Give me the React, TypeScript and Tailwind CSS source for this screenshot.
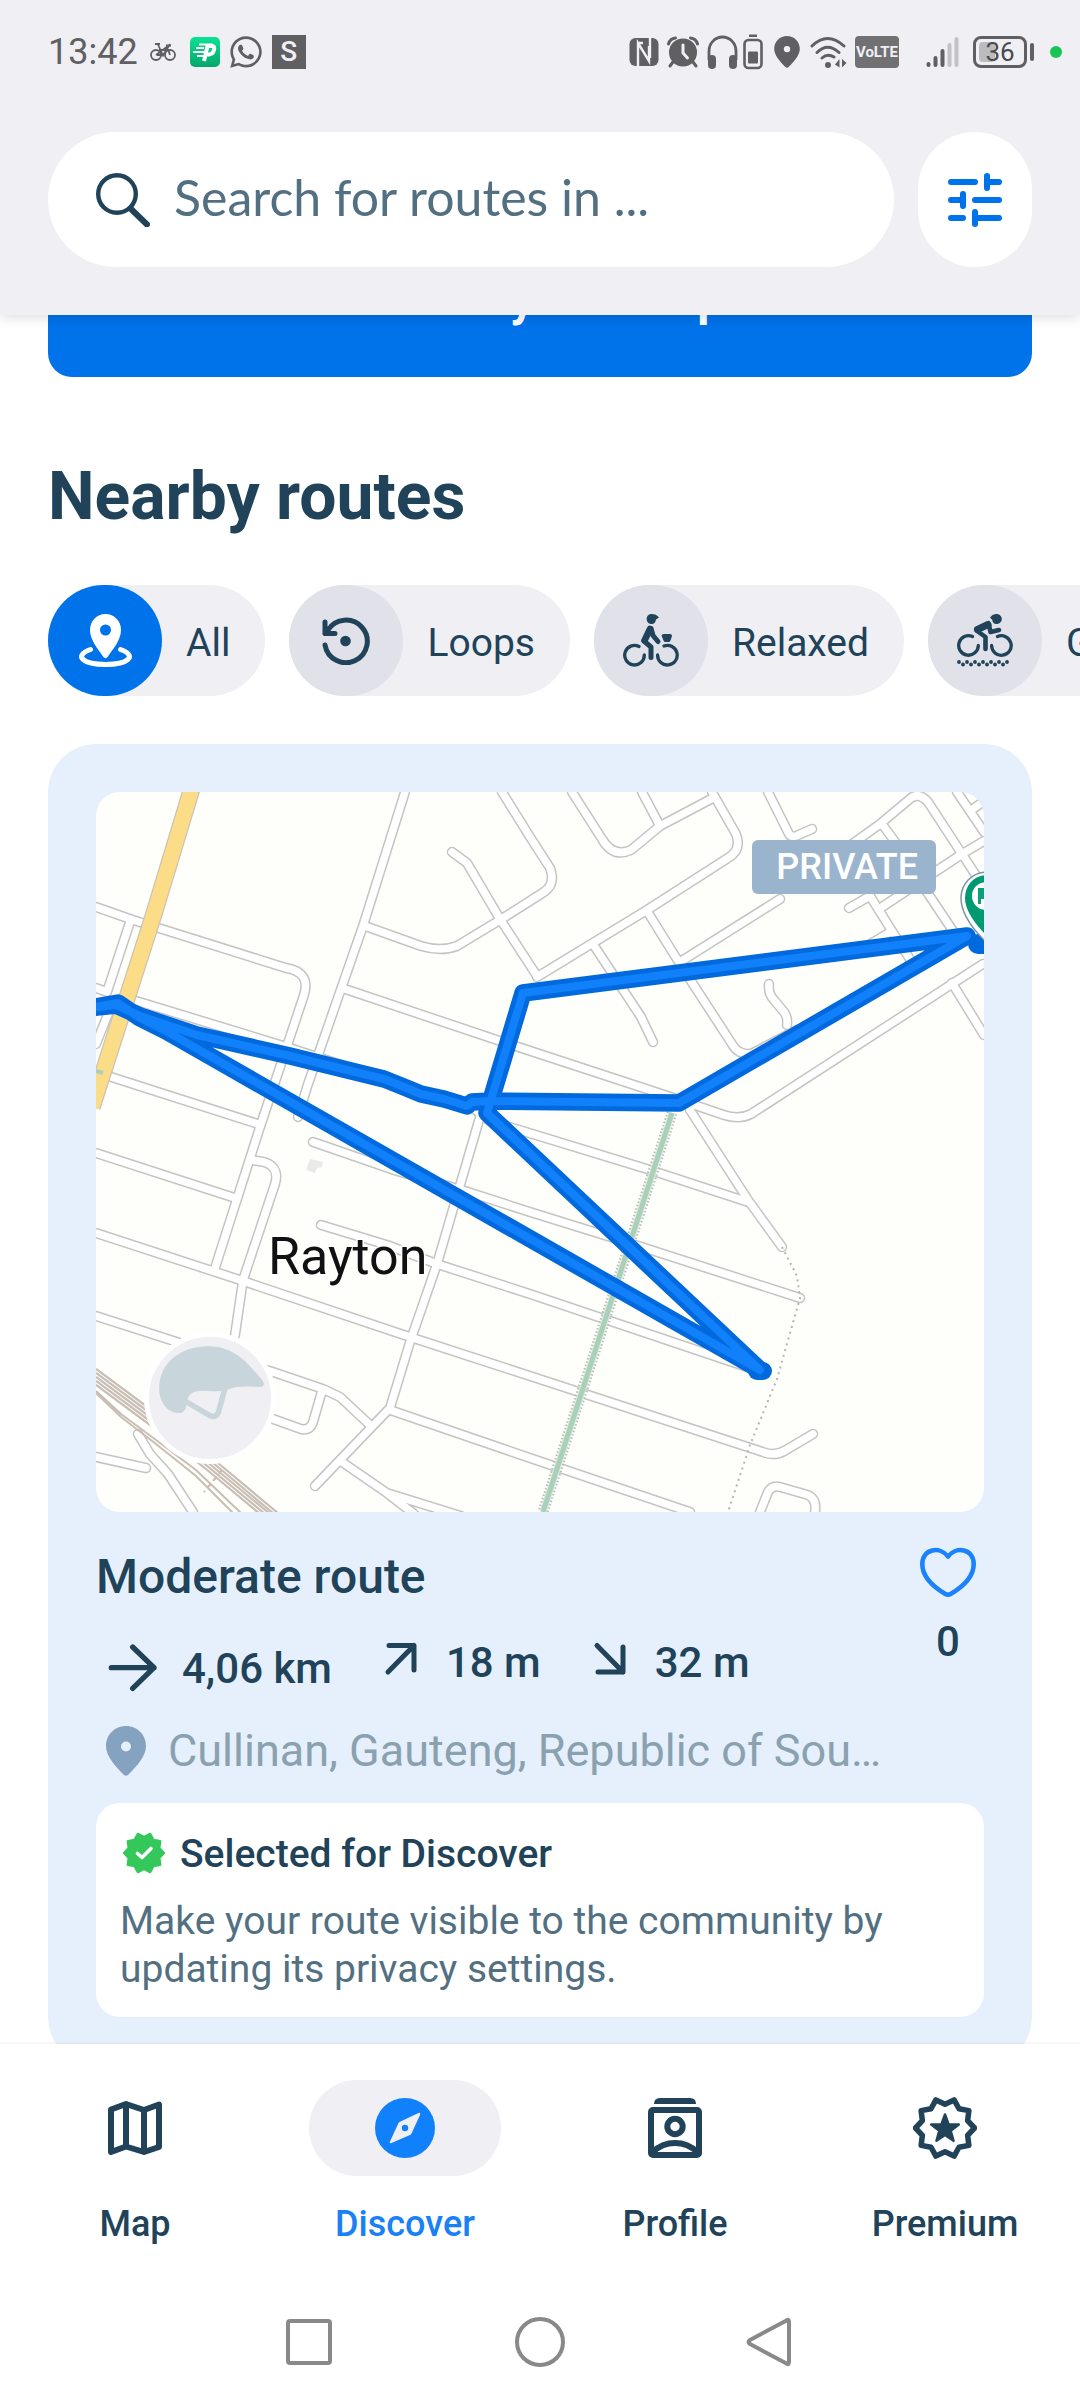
import type { ReactNode } from 'react';
import { FaWhatsapp } from 'react-icons/fa';

type Point = [number, number];

// Scalloped badge / star outline around a centre point
function starPoints(cx: number, cy: number, outer: number, inner: number, tips: number, start = 0) {
    const points: Point[] = [];
    for (let i = 0; i < tips * 2; i++) {
        const r = i % 2 === 0 ? outer : inner;
        const a = start + (i * Math.PI) / tips;
        points.push([cx + r * Math.cos(a), cy + r * Math.sin(a)]);
    }
    return points.map((p) => p.join(',')).join(' ');
}

const PinShape = ({ className }: { className: string }) => (
    <svg viewBox="0 0 40 50" className={className} fill="currentColor" fillRule="evenodd" aria-hidden="true">
        <path d="M20 0C31 0 40 8.500 40 20C40 30 31 40 22.500 48.500Q20 51 17.500 48.500C9 40 0 30 0 20C0 8.500 9 0 20 0ZM20 15.500A5 5 0 1 0 20 25.500A5 5 0 1 0 20 15.500Z" />
    </svg>
);

function StatusBar() {
    return (
        <div className="flex h-[104px] items-center justify-between pl-12 pr-[18px] text-[#606063]">
            <div className="flex items-center">
                <span className="text-4xl leading-none">13:42</span>
                <svg viewBox="0 0 26 20" className="ml-3 h-5 w-[26px]" fill="none" stroke="currentColor" strokeWidth="1.800" aria-hidden="true">
                    <circle cx="6" cy="13" r="5" />
                    <circle cx="20" cy="13" r="5" />
                    <path d="M5 2h5M6 13L18 4M8 2.500L13 13.500L20 2M16 3.500h5M7 13h5M17 4L20 13M9 8h8" />
                </svg>
                <svg viewBox="0 0 30 30" className="ml-[14px] size-[30px]" aria-hidden="true">
                    <defs>
                        <linearGradient id="app-green" x1="0" y1="0" x2="0" y2="1">
                            <stop offset="0" stopColor="#0be295" />
                            <stop offset="1" stopColor="#04a66c" />
                        </linearGradient>
                    </defs>
                    <rect width="30" height="30" rx="5" fill="url(#app-green)" />
                    <path d="M9 7.500h14M6 11h8M3 15h11M7 19h6" stroke="#fff" strokeWidth="2" />
                    <path d="M14 24L17.500 9H22Q25 9 24 13T19 17.500H15" fill="none" stroke="#fff" strokeWidth="4" />
                </svg>
                <FaWhatsapp className="ml-2 size-9" aria-hidden="true" />
                <span className="ml-2 flex h-[34px] w-[34px] items-center justify-center bg-[#606063] text-[28px] leading-none font-medium text-[#efeff4]">S</span>
            </div>
            <div className="flex items-center gap-2">
                <svg viewBox="0 0 30 32" className="h-8 w-[30px]" aria-hidden="true">
                    <rect x="0.500" y="2" width="29" height="28" rx="6" fill="currentColor" />
                    <path d="M9 30V7L20 25V10M9 7L14 7M21 2V22" stroke="#efeff4" strokeWidth="2.400" fill="none" />
                </svg>
                <svg viewBox="0 0 32 32" className="size-8" fill="none" stroke="currentColor" aria-hidden="true">
                    <circle cx="16" cy="16.500" r="14" fill="currentColor" stroke="none" />
                    <path d="M1.500 8Q3 2.500 8.500 2M30.500 8Q29 2.500 23.500 2M6 26L3 30M26 26L29 30" strokeWidth="3" strokeLinecap="round" />
                    <path d="M16 9V17L20.500 22" stroke="#efeff4" strokeWidth="3" strokeLinecap="round" />
                </svg>
                <svg viewBox="0 0 57 36" className="h-9 w-[57px]" fill="none" stroke="currentColor" aria-hidden="true">
                    <path d="M2 26V17A13.500 14 0 0 1 29 17V26" strokeWidth="2.800" />
                    <rect x="1" y="21" width="8" height="14" rx="4" fill="currentColor" stroke="none" />
                    <rect x="22" y="21" width="8" height="14" rx="4" fill="currentColor" stroke="none" />
                    <rect x="37.500" y="6" width="17" height="28" rx="4" strokeWidth="2.600" />
                    <rect x="42" y="0.500" width="8" height="2.500" fill="currentColor" stroke="none" />
                    <rect x="41" y="17.500" width="10" height="12" rx="1" fill="currentColor" stroke="none" />
                </svg>
                <div className="flex w-[30px] justify-center">
                    <PinShape className="h-8 w-[26px]" />
                </div>
                <svg viewBox="0 0 37 32" className="h-8 w-[37px]" fill="none" stroke="currentColor" strokeWidth="3" strokeLinecap="round" aria-hidden="true">
                    <path d="M2 10Q17.500 -5 34 10M7 16.500Q17.500 6 29 16.500M12 22Q17.500 17 24 21" />
                    <circle cx="18" cy="29" r="3" fill="currentColor" stroke="none" />
                    <path d="M25 28.500L29.500 23V31.500ZM32 23V31.500L36.500 27Z" fill="currentColor" stroke="none" />
                </svg>
                <span className="flex h-8 w-11 items-center justify-center rounded-sm bg-[#717174] text-[15px] leading-none font-bold text-[#efeff4]">VoLTE</span>
                <svg viewBox="0 0 58 32" className="h-8 w-[58px]" stroke="currentColor" strokeWidth="4" strokeLinecap="round" aria-hidden="true">
                    <path d="M21.500 28V29M28.500 22V29M35.500 15V29" />
                    <path d="M42.500 9V29M49.500 3V29" opacity=".3" />
                </svg>
                <div className="flex items-center">
                    <span className="relative flex h-8 w-[54px] items-center justify-center rounded-lg border-[3px] border-current text-[26px] leading-none">
                        <span className="absolute top-[3px] bottom-[3px] left-[3px] w-4 rounded-sm bg-[#bcbcc0]" />
                        <span className="relative text-[#4b4b4e]">36</span>
                    </span>
                    <span className="ml-[3px] h-[18px] w-1 rounded-full bg-current" />
                </div>
                <span className="ml-2 size-3 rounded-full bg-[#17c555]" />
            </div>
        </div>
    );
}

function Header() {
    return (
        <header className="relative z-10 shrink-0 bg-[#efeff4] shadow-[0_2px_12px_rgba(0,0,0,0.15)]">
            <StatusBar />
            <div className="flex gap-6 px-12 pt-7 pb-12">
                <label className="flex h-[135px] min-w-0 flex-1 items-center rounded-full bg-white px-12">
                    <svg viewBox="0 0 54 54" className="size-[54px] shrink-0" fill="none" stroke="#204359" strokeLinecap="round" aria-hidden="true">
                        <circle cx="21" cy="21" r="18.800" strokeWidth="4.400" />
                        <path d="M35 36L51 51.500" strokeWidth="6" />
                    </svg>
                    <input
                        type="search"
                        aria-label="Search for routes"
                        placeholder="Search for routes in ..."
                        className="ml-6 w-full min-w-0 bg-transparent pb-1.5 font-['Lato',sans-serif] text-[50px] leading-[60px] text-[#204359] outline-none placeholder:text-[#527082]"
                    />
                </label>
                <button type="button" aria-label="Filters" className="flex h-[135px] w-[114px] items-center justify-center rounded-full bg-white">
                    <svg viewBox="0 0 54 54" className="size-[54px]" fill="none" stroke="#0072ea" strokeWidth="6" strokeLinecap="round" aria-hidden="true">
                        <path d="M3 9H27M39 3V15M39 9H51M3 27H15M15 21V33M27 27H51M3 45H15M27 39V51M27 45H51" />
                    </svg>
                </button>
            </div>
        </header>
    );
}

const AllIcon = () => (
    <svg viewBox="0 0 53 53" className="size-[53px]" aria-hidden="true">
        <path fill="#fff" fillRule="evenodd" d="M26.500 0C35.500 0 42 7 42 16C42 26 34 35 29 42.500Q26.500 46 24 42.500C19 35 11 26 11 16C11 7 17.500 0 26.500 0ZM26.500 10.500A5.500 5.500 0 1 0 26.500 21.500A5.500 5.500 0 1 0 26.500 10.500Z" />
        <path fill="none" stroke="#fff" strokeWidth="5" strokeLinecap="round" d="M11.500 35.500C-6 42 4 50.500 26.500 50.500S59 42 41.500 35.500" />
    </svg>
);

const LoopsIcon = () => (
    <svg viewBox="0 0 48 48" className="size-12" fill="none" stroke="currentColor" strokeWidth="5" strokeLinecap="round" strokeLinejoin="round" aria-hidden="true">
        <path d="M3 28A21.300 21.300 0 1 0 6 13L3 16.500H13M3 5V16.500" />
        <circle cx="23.500" cy="24" r="5.300" fill="currentColor" stroke="none" />
    </svg>
);

const RelaxedIcon = () => (
    <svg viewBox="0 0 56 54" className="h-[54px] w-14" fill="none" stroke="currentColor" strokeLinecap="round" strokeLinejoin="round" aria-hidden="true">
        <path strokeWidth="3.300" d="M16 32.500A9.800 9.800 0 1 0 21.300 41M34.600 41A9.800 9.800 0 1 0 41 32" />
        <path fill="currentColor" stroke="none" d="M28.500 0C32 0 34 1 36 3.500L33 5.500C32.500 8.500 31 10 28.500 10C25.500 10 23.700 7.700 23.700 5S25.500 0 28.500 0Z" />
        <path strokeWidth="6.500" d="M27 15L21.500 26.500" />
        <path strokeWidth="5" d="M28 14.500L30 21.500L35 27.500M21 27L28 33V43.500" />
        <path fill="currentColor" stroke="none" d="M38.500 21.500Q39 20 41 20H47Q49 20 49 22L47.500 26.500Q47 28 45.500 28H42.500Q41 28 40.500 26.500Z" />
    </svg>
);

const GravelIcon = () => (
    <svg viewBox="0 0 56 54" className="h-[54px] w-14" fill="none" stroke="currentColor" strokeLinecap="round" strokeLinejoin="round" aria-hidden="true">
        <path strokeWidth="3.300" d="M15.500 22.500A9.800 9.800 0 1 0 21.300 31.500M34.600 31.500A9.800 9.800 0 1 0 40.500 22.500" />
        <path fill="currentColor" stroke="none" d="M33 3.500C35 1 37 0 39.500 0C42.500 0 44.800 2.200 44.800 5S42.500 10 39.500 10C37 10 35.500 8.500 35.300 6Z" />
        <path strokeWidth="7" d="M20.500 15.500L31 10.500" />
        <path strokeWidth="4.600" d="M32 11L33.500 18L42 16M19.500 16.500L28.500 23V35" />
        <path strokeWidth="3.800" strokeDasharray="0 4.720" d="M2 48L6 50.500L10 48L14 50.500L18 48L22 50.500L26 48L30 50.500L34 48L38 50.500L42 48L46 50.500L50 48L54 50.500" />
    </svg>
);

const filters: { label: string; icon: ReactNode; active?: boolean }[] = [
    { label: 'All', icon: <AllIcon />, active: true },
    { label: 'Loops', icon: <LoopsIcon /> },
    { label: 'Relaxed', icon: <RelaxedIcon /> },
    { label: 'Gravel', icon: <GravelIcon /> },
];

function FilterChips() {
    return (
        <div className="mt-12 flex gap-6 overflow-hidden pl-12">
            {filters.map(({ label, icon, active }) => (
                <button key={label} type="button" aria-pressed={!!active} className="flex h-[111px] shrink-0 items-center rounded-full bg-[#efeff4] pr-[35px] text-[39px]">
                    <span className={`flex h-full w-[114px] items-center justify-center rounded-full ${active ? 'bg-[#0072ea]' : 'bg-[#e0e1e9]'}`}>{icon}</span>
                    <span className="ml-6 pt-1.5">{label}</span>
                </button>
            ))}
        </div>
    );
}

const roads = [
    'M0 115L37 128L190 176Q215 180 208 203L164 335L119 476',
    'M34 130L11 200L0 196M37 208L191 255L377 316L394 329L551 377L652 410',
    'M12 222L0 252',
    'M309 0L267 134L244 200L211 295L202 325',
    'M269 134L325 154Q345 160 361 154L404 128L448 100Q460 92 454 76L434 45L406 0',
    'M356 60L371 71L404 127L441 184',
    'M246 196L404 249L581 307L628 323Q643 328 655 322L887 172',
    'M441 185L551 118L632 66Q646 58 640 42L616 0',
    'M476 0L506 47Q517 66 535 58L564 34L617 6',
    'M546 0L564 34',
    'M497 152L545 225L557 250',
    'M551 119L584 172L636 252Q642 263 655 262L701 238',
    'M584 170L684 107',
    'M673 192Q672 202 678 208L688 220Q692 225 691 233',
    'M672 0L692 40Q694 46 700 44L716 37',
    'M734 68L784 32L815 6Q823 0 832 10L866 62L887 94',
    'M786 32L811 66L827 94L857 139',
    'M888 49L866 62L786 115',
    'M753 116L774 104L796 139L817 172M796 139L761 160',
    'M861 0L888 40M874 19L888 9',
    'M856 191L888 243',
    'M594 318L652 408L686 455',
    'M217 350L301 379L369 399L434 420L524 448L704 506',
    'M225 433L291 453L341 472L434 502L651 575',
    'M0 441L144 488L314 545L434 584L667 660Q679 665 690 658L717 642',
    'M0 524L81 550L177 580L227 597L244 605L274 633',
    'M177 627L205 637Q214 639 217 630L226 599',
    'M386 318L341 472L314 550L294 616L219 694',
    'M294 618L434 666L594 720',
    'M246 670L291 701L318 722M291 701L365 724',
    'M156 368L168 370Q184 375 179 392L147 488L139 543',
    'M12 284L162 332',
    'M0 361L139 406',
    'M0 665L50 676',
    'M42 642L54 662L72 682L97 720',
    'M664 720L672 700Q676 693 684 695L712 703Q721 707 719 720',
];

const routePath =
    'M-6 216L20 213L44 224L101 243L194 264L288 287L308 295L325 302L348 307L371 314L376 310L394 309L583 311L871 144L427 201L391 321L664 578L70 239L44 226L22 211L-6 216';

function RouteMap() {
    return (
        <svg viewBox="0 0 888 720" preserveAspectRatio="xMidYMid slice" className="h-full w-full" fill="none" role="img" aria-label="Route map around Rayton">
            <rect width="888" height="720" fill="#fefffa" />
            <g strokeLinecap="round" strokeLinejoin="round">
                <g stroke="#c4c4c4" strokeWidth="10.500">
                    {roads.map((d) => <path key={d} d={d} />)}
                </g>
                <g stroke="#fff" strokeWidth="7.500">
                    {roads.map((d) => <path key={d} d={d} />)}
                </g>
            </g>
            {/* Railway */}
            <g stroke="#c9beb6" strokeWidth="2.200">
                <path d="M0 577L50 614L110 661L183 722M0 581L50 618L110 665L178 722M0 585L50 622L110 669L174 722M0 589L50 626L110 673L169 722M0 593L50 630L110 677L164 722" />
                <path d="M0 599L25 622L60 648L100 678L146 722M0 601L25 625L60 652L100 684L138 722" strokeWidth="2" />
                <path d="M126 678L108 700" strokeDasharray="5 4" />
            </g>
            {/* Footpath and green strip */}
            <path d="M686 455L701 484L704 506L681 587L654 653L632 720" stroke="#b5b5b5" strokeWidth="2" strokeDasharray="2 4" />
            <path d="M576 321L447 720" stroke="#b9bdb8" strokeWidth="11" strokeDasharray="1.500 2" />
            <path d="M576 321L447 720" stroke="#dfe9df" strokeWidth="7" />
            <path d="M576 321L447 720" stroke="#a9d1b9" strokeWidth="5" />
            <path d="M214 367L227 370L226 375L221 376L219 381L210 378Z" fill="#e9ebea" />
            {/* Main road */}
            <path d="M96 -4L57 125L-4 315" stroke="#cfc0b6" strokeWidth="17.500" />
            <path d="M96 -4L57 125L-4 315" stroke="#fcdd87" strokeWidth="15" />
            <path d="M0 279L7 281" stroke="#a9d1b9" strokeWidth="4" />
            <text x="172" y="482" fill="#111" fontSize="52" stroke="#fff" strokeWidth="3" paintOrder="stroke">Rayton</text>
            {/* Recorded track */}
            <g strokeLinecap="round" strokeLinejoin="round">
                <path d={routePath} stroke="#0069de" strokeWidth="17.500" />
                <path d="M661 579H667" stroke="#0069de" strokeWidth="18" />
                <path d="M882 152H892" stroke="#0069de" strokeWidth="20" />
                <path d={routePath} stroke="#1180fb" strokeWidth="8" />
            </g>
            <path d="M891 80C876 80 865 92 865 106C865 120 875 135 888 148H894V80Z" fill="#fff" stroke="#7d93a3" strokeWidth="1.500" />
            <path d="M891 83C878 83 869 93 869 106C869 118 878 131 891 144Z" fill="#009a72" />
            <circle cx="890" cy="104" r="14" fill="#fff" />
            <path d="M882 96H891V107H885V112H882Z" fill="#0a9f78" />
        </svg>
    );
}

function HelmetAvatar() {
    return (
        <svg viewBox="0 0 132 132" className="absolute bottom-12 left-12 size-[132px] rounded-full border-[5px] border-white bg-[#efeff4]" role="img" aria-label="Route author">
            <path d="M11 56C11 28 34 10 64 10C94 10 108 30 123 47Q127 54 119 54C108 54 98 52 84 57C68 62 54 54 45 62C38 68 44 78 35 82C22 84 11 72 11 56Z" fill="#c8d5da" />
            <path d="M40 70L66 85Q72 88 75 82L82 56" fill="none" stroke="#c8d5da" strokeWidth="6" />
        </svg>
    );
}

const Stroked = ({ d, className, width }: { d: string; className: string; width: number }) => (
    <svg viewBox="0 0 54 54" className={className} fill="none" stroke="currentColor" strokeWidth={width} strokeLinecap="round" strokeLinejoin="round" aria-hidden="true">
        <path d={d} />
    </svg>
);

function RouteCard() {
    return (
        <article className="mx-12 mt-12 rounded-[48px] bg-[#e6f0fd] p-12">
            <div className="relative aspect-[37/30] w-full overflow-hidden rounded-3xl">
                <RouteMap />
                <span className="absolute top-12 right-12 flex h-[54px] items-center rounded-md bg-[#9bb4cd] pr-[18px] pl-6 text-4xl font-medium text-white">PRIVATE</span>
                <HelmetAvatar />
            </div>
            <div className="flex">
                <div className="min-w-0 flex-1 pr-5">
                    <h3 className="mt-[35px] text-5xl leading-[60px] font-medium">Moderate route</h3>
                    <div className="mt-[26px] flex h-[72px] items-start gap-[42px] text-[42px] leading-[60px] font-medium">
                        <span className="flex h-[72px] items-center gap-[14px]">
                            <Stroked className="size-[72px]" width={4} d="M11.500 26H43.500M27.500 10.500L43.500 26L27.500 41.500" />
                            4,06 km
                        </span>
                        <span className="flex gap-[18px]">
                            <Stroked className="size-[54px]" width={5} d="M15 12.500H40V37M40 12.500L14 39" />
                            18 m
                        </span>
                        <span className="flex gap-[18px]">
                            <Stroked className="size-[54px]" width={5} d="M40 14V39H15M14 12.500L40 39" />
                            32 m
                        </span>
                    </div>
                    <div className="mt-2 flex h-[75px] items-center">
                        <span className="flex w-[60px] shrink-0 justify-center">
                            <PinShape className="h-[50px] w-10 text-[#85a2c0]" />
                        </span>
                        <p className="ml-3 truncate text-[45px] leading-[60px] text-[#8aa1af]">Cullinan, Gauteng, Republic of South Africa</p>
                    </div>
                </div>
                <div className="flex w-[72px] flex-col items-center gap-1 pt-6">
                    <button type="button" aria-label="Like route" className="flex size-[72px] items-center justify-center">
                        <svg viewBox="0 0 56 50" className="h-[50px] w-14" fill="none" stroke="#1a82fb" strokeWidth="4.600" strokeLinejoin="round" aria-hidden="true">
                            <path d="M28 9.500C20 -1 2.300 1.500 2.300 17C2.300 32 17 42 25 46.800Q28 48.500 31 46.800C39 42 53.700 32 53.700 17C53.700 1.500 36 -1 28 9.500Z" />
                        </svg>
                    </button>
                    <span className="text-[42px] leading-[60px] font-medium">0</span>
                </div>
            </div>
            <section className="mt-[15px] rounded-3xl bg-white p-6 text-[39px]">
                <div className="flex h-[54px] items-center gap-3">
                    <svg viewBox="0 0 48 48" className="size-12" aria-hidden="true">
                        <polygon points={starPoints(24, 23, 20, 16, 10)} fill="#34c759" stroke="#34c759" strokeWidth="2.500" strokeLinejoin="round" />
                        <path d="M17.500 23.500L22 27.500L31 18.500" fill="none" stroke="#fff" strokeWidth="3.600" strokeLinecap="round" strokeLinejoin="round" />
                    </svg>
                    <h4 className="font-medium">Selected for Discover</h4>
                </div>
                <p className="mt-4 leading-[48px] text-[#527082]">Make your route visible to the community by updating its privacy settings.</p>
            </section>
        </article>
    );
}

const tabs: { label: string; icon: ReactNode; active?: boolean }[] = [
    {
        label: 'Map',
        icon: <Stroked className="size-[54px]" width={6} d="M3 8.500L18 3L36 9L51 3.500V46L36 51L18 45.500L3 51ZM18 3V45.500M36 9V51" />,
    },
    {
        label: 'Discover',
        active: true,
        icon: (
            <svg viewBox="0 0 60 60" className="size-[60px]" aria-hidden="true">
                <circle cx="30" cy="30" r="30" fill="#1180fb" />
                <path d="M24.500 24L43.500 15Q46 14 45 17L36.500 35.500Q36 36.500 35 37L16.500 45Q14 46 15 43.500L23.500 25Z" fill="#efeff4" />
                <circle cx="30" cy="30" r="3.200" fill="#1180fb" />
            </svg>
        ),
    },
    {
        label: 'Profile',
        icon: (
            <svg viewBox="0 0 54 60" className="h-[60px] w-[54px]" fill="none" stroke="currentColor" strokeWidth="6" strokeLinejoin="round" aria-hidden="true">
                <path d="M6 6Q6 0 12 0H42Q48 0 48 6Z" fill="currentColor" stroke="none" />
                <rect x="3" y="12" width="48" height="45" rx="2" />
                <circle cx="27" cy="28.500" r="7.700" />
                <path d="M5 54Q14 45 27 45T49 54" />
            </svg>
        ),
    },
    {
        label: 'Premium',
        icon: (
            <svg viewBox="0 0 64 64" className="size-16" stroke="currentColor" strokeLinejoin="round" aria-hidden="true">
                <polygon points={starPoints(32, 32, 29.5, 23.8, 10)} fill="none" strokeWidth="5.500" />
                <polygon points={starPoints(32, 33, 14.5, 6, 5, -Math.PI / 2)} fill="currentColor" strokeWidth="2.500" />
            </svg>
        ),
    },
];

function BottomNav() {
    return (
        <nav className="relative z-10 grid shrink-0 grid-cols-4 bg-white pt-9 pb-9 shadow-[0_0_3px_rgba(0,0,0,0.12)]">
            {tabs.map(({ label, icon, active }) => (
                <a key={label} href="#" aria-current={active ? 'page' : undefined} className={`flex flex-col items-center text-4xl leading-[48px] font-medium ${active ? 'text-[#1a80f5]' : ''}`}>
                    <span className={`flex h-24 w-48 items-center justify-center rounded-full ${active ? 'bg-[#efeff4]' : ''}`}>{icon}</span>
                    <span className="mt-6 leading-[48px]">{label}</span>
                </a>
            ))}
        </nav>
    );
}

function SystemNav() {
    return (
        <div className="relative z-10 flex h-[116px] shrink-0 items-center justify-center gap-[177px] bg-white text-[#898989]">
            <button type="button" aria-label="Recent apps" className="flex w-[54px] justify-center">
                <span className="size-[46px] rounded-sm border-4 border-current" />
            </button>
            <button type="button" aria-label="Home" className="flex w-[54px] justify-center">
                <span className="size-[50px] rounded-full border-4 border-current" />
            </button>
            <button type="button" aria-label="Back" className="flex w-[54px] justify-center">
                <Stroked className="size-[54px]" width={4} d="M42.500 5.500Q45 3.500 45 7V47Q45 50.500 42.500 48.500L6 29Q3 27 6 25Z" />
            </button>
        </div>
    );
}

function App() {
    return (
        <div className="flex h-screen flex-col overflow-hidden bg-white font-['Roboto',sans-serif] text-[#204359]">
            <Header />
            <main className="min-h-0 flex-1 overflow-hidden">
                <div className="-mt-[94px] flex px-12">
                    <button type="button" className="h-39 flex-1 rounded-3xl bg-[#0072ea] text-5xl font-bold text-white">Create your Loop</button>
                </div>
                <h2 className="mt-20 px-12 text-[66px] leading-[80px] font-bold">Nearby routes</h2>
                <FilterChips />
                <RouteCard />
            </main>
            <BottomNav />
            <SystemNav />
        </div>
    );
}

export default App;
